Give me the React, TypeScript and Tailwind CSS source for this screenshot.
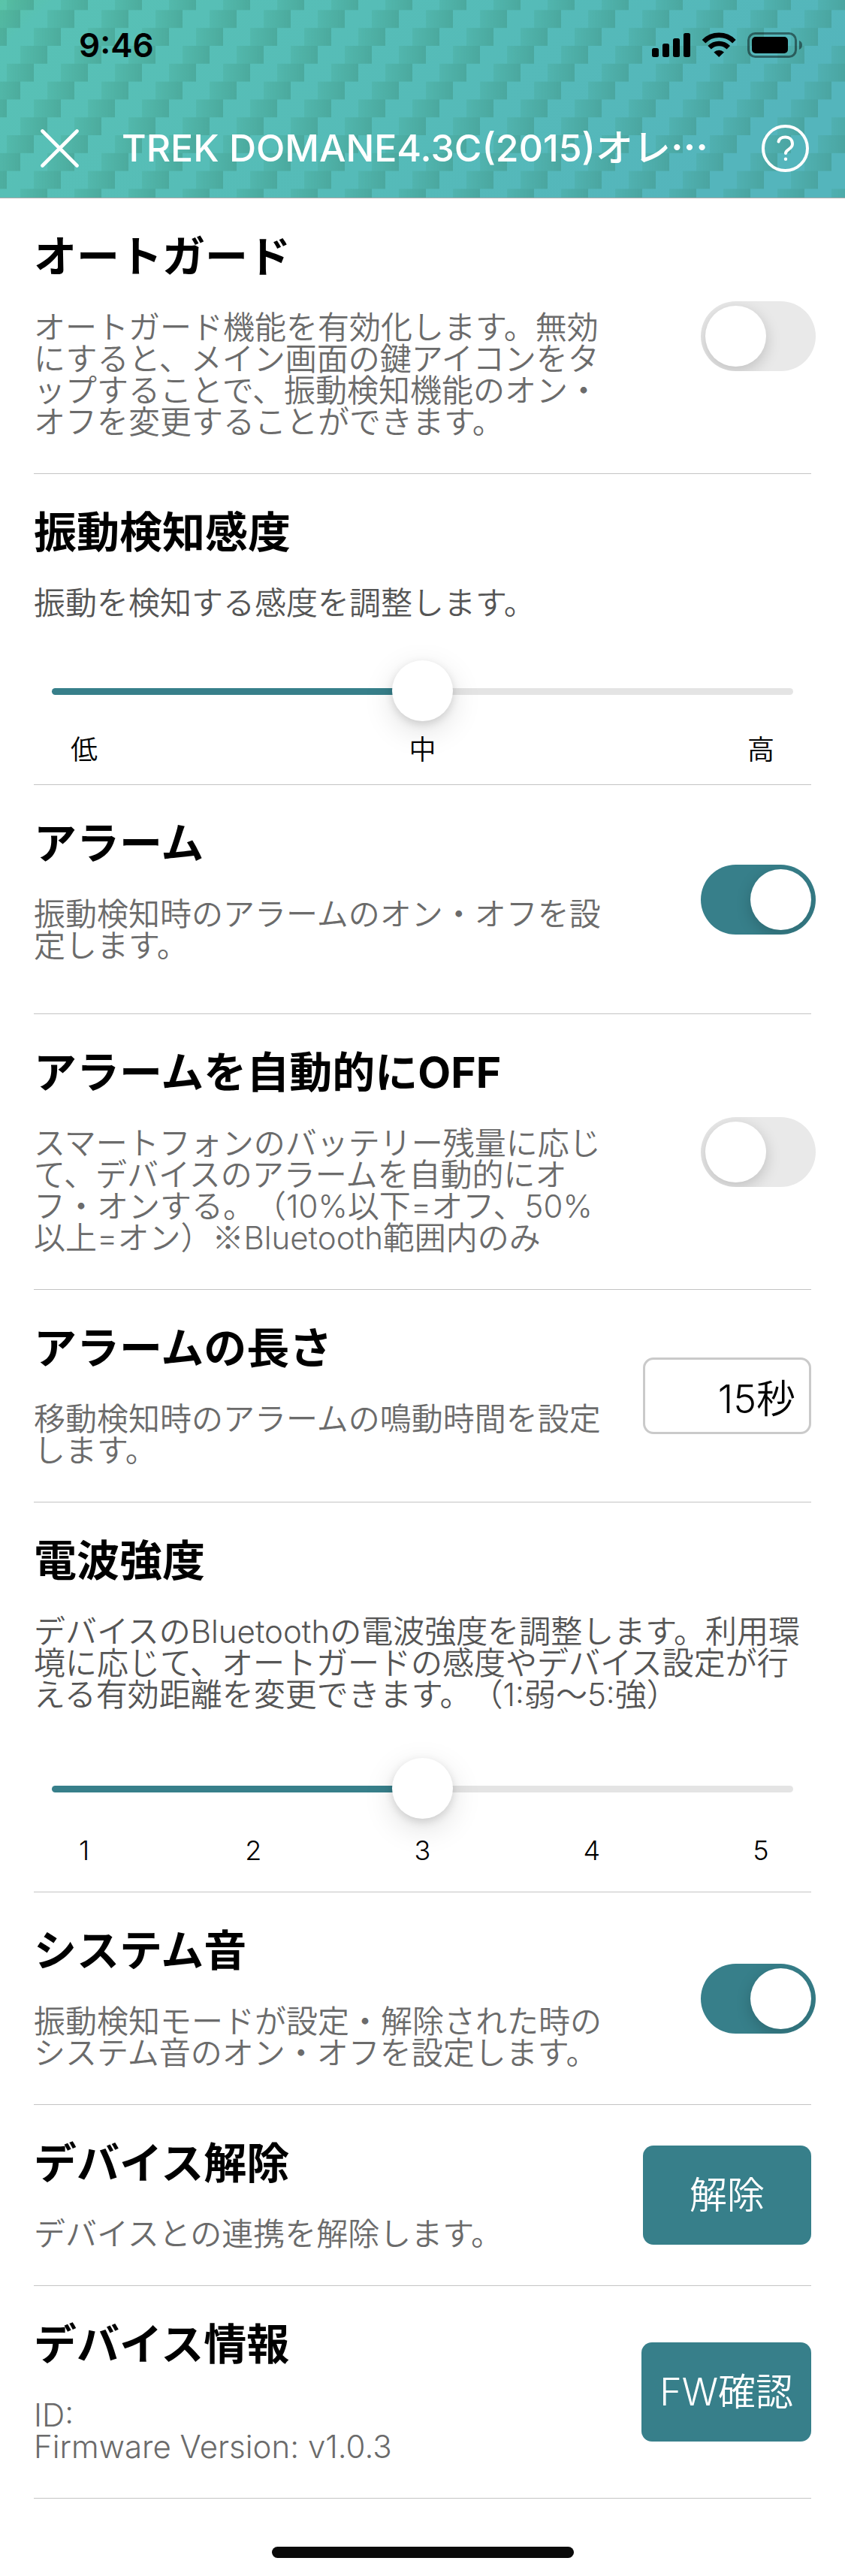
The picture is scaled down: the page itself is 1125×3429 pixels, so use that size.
import { useState } from "react";
import type { CSSProperties, ReactNode } from "react";

// carbon-like weave: 36px blocks, each row shifted 18px to the left
const WEAVE = [
  { x: 63, y: 0 },
  { x: -9, y: 0 },
  { x: 45, y: 23.8 },
  { x: -27, y: 23.8 },
  { x: 27, y: 47.6 },
  { x: 9, y: 71.4 },
];

function HeaderBackground() {
  return (
    <svg className="absolute inset-0 -z-10 h-full w-full" aria-hidden="true">
      <defs>
        <linearGradient id="base" x1="0" y1="0" x2="1" y2="0.25">
          <stop offset="0" stopColor="#5ac4a8" />
          <stop offset="0.06" stopColor="#58c1b5" />
          <stop offset="0.6" stopColor="#55bbb8" />
          <stop offset="1" stopColor="#54b5bc" />
        </linearGradient>
        <linearGradient id="block" x1="0" y1="0" x2="1" y2="0">
          <stop offset="0" stopColor="#389070" stopOpacity="0.14" />
          <stop offset="1" stopColor="#388670" stopOpacity="0.36" />
        </linearGradient>
        <pattern id="weave" width="72" height="95.2" patternUnits="userSpaceOnUse" patternTransform="translate(0 13.4)">
          {WEAVE.map((b) => (
            <rect key={`${b.x}-${b.y}`} x={b.x} y={b.y} width="36" height="23.8" fill="url(#block)" />
          ))}
        </pattern>
      </defs>
      <rect width="100%" height="100%" fill="url(#base)" />
      <rect width="100%" height="100%" fill="url(#weave)" />
    </svg>
  );
}

function StatusIcons() {
  return (
    <svg className="h-[34px] w-[200px]" viewBox="0 0 200 34" aria-hidden="true">
      <rect x="0" y="21" width="9" height="12" rx="2.5" />
      <rect x="14" y="15" width="9" height="18" rx="2.5" />
      <rect x="28" y="8" width="9" height="25" rx="2.5" />
      <rect x="42" y="1" width="9" height="32" rx="2.5" />
      <g fill="none" stroke="#000" strokeWidth="6.4">
        <path d="M69 12.2a28.5 28.5 0 0 1 40.4 0" />
        <path d="M76.6 20.2a18 18 0 0 1 25.2 0" />
      </g>
      <path d="M82.4 26.4a10 10 0 0 1 13.6 0L89.2 33z" />
      <rect x="128.5" y="1.5" width="63" height="31" rx="9" fill="none" stroke="#000" strokeOpacity="0.45" strokeWidth="3" />
      <rect x="133" y="6" width="48" height="22" rx="5" />
      <path d="M196 11a6.5 6.5 0 0 1 0 12z" fillOpacity="0.45" />
    </svg>
  );
}

function Header() {
  return (
    <header className="relative isolate overflow-hidden border-b border-[#a9a9a9]">
      <HeaderBackground />
      <div className="flex h-30 items-center justify-between pr-[57px] pl-[105px]">
        <span className="font-[Inter] text-[44px] leading-none font-semibold text-black">9:46</span>
        <StatusIcons />
      </div>
      <div className="mt-[11px] flex h-33 items-center pr-12 pl-[54px] text-white">
        <button type="button" aria-label="閉じる" className="shrink-0">
          <svg className="size-[51px]" viewBox="0 0 51 51" fill="none" stroke="currentColor" strokeWidth="4.6" strokeLinecap="round">
            <path d="M2.5 2.5l46 46M48.5 2.5l-46 46" />
          </svg>
        </button>
        <h1 className="ml-[57px] min-w-0 flex-1 text-[50px] leading-[60px] font-medium whitespace-nowrap">
          TREK DOMANE4.3C(2015)オレ<span className="font-['Noto_Sans_CJK_JP',sans-serif] leading-[0px] font-bold">…</span>
        </h1>
        <button type="button" aria-label="ヘルプ" className="shrink-0">
          <svg className="size-[63px]" viewBox="0 0 63 63" fill="none" stroke="currentColor" strokeWidth="4" strokeLinecap="round" strokeLinejoin="round">
            <circle cx="31.5" cy="31.5" r="29.5" />
            <path d="M22.5 22.5c1-4 4.5-6 9-6 5.5 0 9.5 3.5 9.5 9 0 7.5-9 7-9 12.5" />
            <circle cx="32" cy="45.8" r="2.2" fill="currentColor" stroke="none" />
          </svg>
        </button>
      </div>
    </header>
  );
}

type RowProps = {
  title: string;
  text: ReactNode;
  htmlFor?: string;
  tall?: boolean;
  children: ReactNode;
};

function Row({ title, text, htmlFor, tall, children }: RowProps) {
  return (
    <section className="flex items-center justify-between border-b border-[#c4c4c4]">
      <div className={`max-w-[760px] flex-1 pt-[50px] ${tall ? "pb-[69px]" : "pb-[47px]"}`}>
        <h2 className="text-[57px] leading-[56px] font-bold whitespace-nowrap">
          {htmlFor ? <label htmlFor={htmlFor}>{title}</label> : title}
        </h2>
        <p className="mt-[45px] text-[42px] leading-[42px] text-[#6b6b6b]">{text}</p>
      </div>
      {children}
    </section>
  );
}

function Toggle({ id, defaultChecked }: { id: string; defaultChecked?: boolean }) {
  return (
    <input
      id={id}
      type="checkbox"
      role="switch"
      defaultChecked={defaultChecked}
      className="-mr-1.5 h-[93px] w-[153px] shrink-0 cursor-pointer appearance-none overflow-hidden rounded-full bg-[#e9e9e9] p-1.5 before:block before:size-[81px] before:rounded-full before:bg-white before:shadow-[0_6px_20px_rgba(0,0,0,0.18)] checked:bg-[#377f8a] checked:before:translate-x-[60px]"
    />
  );
}

type SliderRowProps = {
  id: string;
  title: string;
  text: string;
  labels: string[];
  initial: number;
  sliderClass: string;
  labelClass: string;
};

function SliderRow({ id, title, text, labels, initial, sliderClass, labelClass }: SliderRowProps) {
  const [value, setValue] = useState(initial);
  const fill = (value / (labels.length - 1)) * 100;

  return (
    <section className="border-b border-[#c4c4c4] pt-[50px]">
      <h2 className="text-[57px] leading-[56px] font-bold">
        <label htmlFor={id}>{title}</label>
      </h2>
      <p className="mt-[45px] text-[42px] leading-[42px] text-[#555555]">{text}</p>
      <div className={`flex px-6 ${sliderClass}`}>
        <input
          id={id}
          type="range"
          min={0}
          max={labels.length - 1}
          value={value}
          onChange={(e) => setValue(Number(e.target.value))}
          style={{ "--fill": `${fill}%` } as CSSProperties}
          className="h-20 w-full cursor-pointer appearance-none bg-transparent [&::-webkit-slider-runnable-track]:h-[9px] [&::-webkit-slider-runnable-track]:rounded-full [&::-webkit-slider-runnable-track]:bg-[linear-gradient(to_right,#377f8a_var(--fill),#e4e4e4_var(--fill))] [&::-webkit-slider-thumb]:-mt-[37px] [&::-webkit-slider-thumb]:size-[81px] [&::-webkit-slider-thumb]:appearance-none [&::-webkit-slider-thumb]:rounded-full [&::-webkit-slider-thumb]:bg-white [&::-webkit-slider-thumb]:shadow-[0_12px_40px_rgba(0,0,0,0.13),0_4px_12px_rgba(0,0,0,0.13)]"
        />
      </div>
      <div className={`flex justify-between px-[49px] text-[36px] leading-[36px] ${labelClass}`}>
        {labels.map((label) => (
          <span key={label} className="w-9 text-center">
            {label}
          </span>
        ))}
      </div>
    </section>
  );
}

function ActionButton({ children }: { children: ReactNode }) {
  return (
    <button
      type="button"
      className="h-33 min-w-56 shrink-0 cursor-pointer rounded-[14px] bg-[#377f8a] px-6 text-[50px] leading-[60px] text-white"
    >
      {children}
    </button>
  );
}

export default function App() {
  const [seconds, setSeconds] = useState("15秒");

  return (
    <div
      lang="ja"
      className="bg-white font-[Inter,'Noto_Sans_CJK_JP',sans-serif] font-[350] text-black [text-spacing-trim:space-all]"
    >
      <Header />

      <main className="px-[45px]">
        <Row
          title="オートガード"
          htmlFor="auto-guard"
          text="オートガード機能を有効化します。無効にすると、メイン画面の鍵アイコンをタップすることで、振動検知機能のオン・オフを変更することができます。"
        >
          <Toggle id="auto-guard" />
        </Row>

        <SliderRow
          id="sensitivity"
          title="振動検知感度"
          text="振動を検知する感度を調整します。"
          labels={["低", "中", "高"]}
          initial={1}
          sliderClass="mt-14"
          labelClass="mt-5 pb-[28px]"
        />

        <Row title="アラーム" htmlFor="alarm" text="振動検知時のアラームのオン・オフを設定します。" tall>
          <Toggle id="alarm" defaultChecked />
        </Row>

        <Row
          title="アラームを自動的にOFF"
          htmlFor="alarm-auto-off"
          text={
            <>
              スマートフォンのバッテリー残量に応じて、デバイスのアラームを自動的にオフ・オンする。（10%以下=オフ、50%以上=オン）
              <span className="font-['Noto_Sans_CJK_JP',sans-serif] leading-[0px]">※</span>Bluetooth範囲内のみ
            </>
          }
        >
          <Toggle id="alarm-auto-off" />
        </Row>

        <Row title="アラームの長さ" htmlFor="alarm-length" text="移動検知時のアラームの鳴動時間を設定します。">
          <input
            id="alarm-length"
            type="text"
            value={seconds}
            onChange={(e) => setSeconds(e.target.value)}
            className="h-[102px] w-56 shrink-0 rounded-[14px] border-3 border-[#cacaca] px-[18px] text-right text-[52px] leading-[60px]"
          />
        </Row>

        <SliderRow
          id="radio-strength"
          title="電波強度"
          text="デバイスのBluetoothの電波強度を調整します。利用環境に応じて、オートガードの感度やデバイス設定が行える有効距離を変更できます。（1:弱〜5:強）"
          labels={["1", "2", "3", "4", "5"]}
          initial={2}
          sliderClass="mt-16"
          labelClass="mt-6 pb-[37px]"
        />

        <Row
          title="システム音"
          htmlFor="system-sound"
          text="振動検知モードが設定・解除された時のシステム音のオン・オフを設定します。"
        >
          <Toggle id="system-sound" defaultChecked />
        </Row>

        <Row title="デバイス解除" text="デバイスとの連携を解除します。">
          <ActionButton>解除</ActionButton>
        </Row>

        <Row
          title="デバイス情報"
          text={
            <>
              ID:
              <br />
              Firmware Version: v1.0.3
            </>
          }
        >
          <ActionButton>FW確認</ActionButton>
        </Row>
      </main>

      {/* home indicator */}
      <div className="flex justify-center pt-16 pb-6">
        <div className="h-[15px] w-[402px] rounded-full bg-[#0a0a0a]" />
      </div>
    </div>
  );
}
